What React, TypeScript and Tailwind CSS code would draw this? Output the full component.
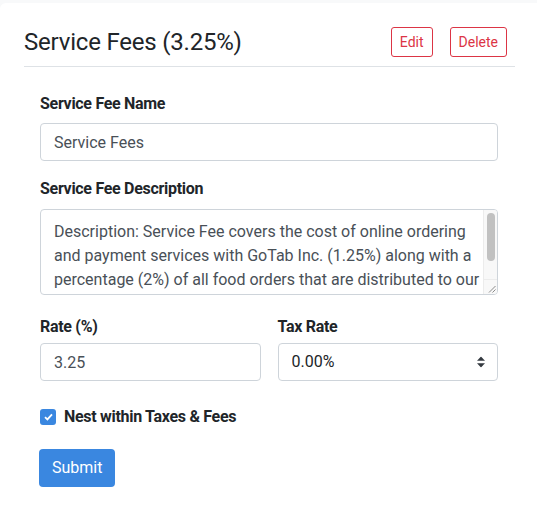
import { useState } from 'react'

const font = { fontFamily: 'Roboto, "Liberation Sans", sans-serif' }

const DESCRIPTION =
  'Description: Service Fee covers the cost of online ordering and payment services with GoTab Inc. (1.25%) along with a percentage (2%) of all food orders that are distributed to our kitchen staff.'

export default function App() {
  const [name, setName] = useState('Service Fees')
  const [description, setDescription] = useState(DESCRIPTION)
  const [rate, setRate] = useState('3.25')
  const [taxRate, setTaxRate] = useState('0.00%')
  const [nested, setNested] = useState(true)

  return (
    <div className="min-h-[509px] bg-[#f8f9fa] pt-[3px]" style={font}>
      <div className="min-h-[506px] rounded-tl-md bg-white pl-6 pr-[22px] text-[#212529]">
        {/* Header */}
        <div className="flex items-center justify-between border-b border-[#dee2e6] pt-6 pb-[9px] pr-2">
          <h2 className="text-[24px] font-normal leading-[30px] tracking-[-0.2px]">Service Fees (3.25%)</h2>
          <div className="flex gap-[17px]">
            <button className="h-[30px] rounded-[3px] border border-[#dc3545] px-2 text-[14px] text-[#dc3545]">
              Edit
            </button>
            <button className="h-[30px] rounded-[3px] border border-[#dc3545] px-2 text-[14px] text-[#dc3545]">
              Delete
            </button>
          </div>
        </div>

        {/* Form */}
        <form className="px-4 pt-[25px] pr-[17px]" onSubmit={(e) => e.preventDefault()}>
          <label className="mb-[7px] block text-[16px] font-bold leading-6 tracking-[-0.3px]">Service Fee Name</label>
          <input
            value={name}
            onChange={(e) => setName(e.target.value)}
            className="block h-[38px] w-full rounded-[4px] border border-[#ced4da] px-[13px] text-[16px] text-[#495057] outline-none"
          />

          <label className="mt-4 mb-2 block text-[16px] font-bold leading-6 tracking-[-0.3px]">Service Fee Description</label>
          <div className="relative">
            <textarea
              value={description}
              onChange={(e) => setDescription(e.target.value)}
              rows={3}
              className="block h-[86px] w-full rounded-[4px] border border-[#ced4da] px-[13px] py-[10px] text-[16px] leading-6 text-[#495057] outline-none [scrollbar-width:none]"
            />
            {/* scrollbar look */}
            <div className="pointer-events-none absolute top-[1px] right-[1px] bottom-[16px] w-[14px] rounded-tr-[3px] border-l border-[#ececec] bg-[#f8f8f8]">
              <div className="absolute top-[3px] left-[3px] h-[48px] w-[8px] rounded-full bg-[#c1c1c1]" />
            </div>
            <div className="pointer-events-none absolute right-[1px] bottom-[1px] h-[15px] w-[14px] rounded-br-[3px] border-t border-l border-[#ececec] bg-[#f8f8f8]">
              <svg className="absolute right-[1px] bottom-[1px]" width="8" height="8" viewBox="0 0 8 8">
                <path d="M7.5 1 L1 7.5 M7.5 4.5 L4.5 7.5" stroke="#8a8a8a" strokeWidth="1" />
              </svg>
            </div>
          </div>

          <div className="mt-[20px] grid grid-cols-2 gap-[17px]">
            <div>
              <label className="mb-1 block text-[16px] font-bold leading-6 tracking-[-0.3px]">Rate (%)</label>
              <input
                value={rate}
                onChange={(e) => setRate(e.target.value)}
                className="block h-[38px] w-full rounded-[4px] border border-[#ced4da] px-[13px] text-[16px] text-[#495057] outline-none"
              />
            </div>
            <div>
              <label className="mb-1 block text-[16px] font-bold leading-6 tracking-[-0.3px]">Tax Rate</label>
              <div className="relative">
                <select
                  value={taxRate}
                  onChange={(e) => setTaxRate(e.target.value)}
                  className="block h-[38px] w-full appearance-none rounded-[4px] border border-[#ced4da] bg-white px-[13px] text-[16px] text-[#212529] outline-none"
                >
                  <option>0.00%</option>
                  <option>5.00%</option>
                  <option>10.00%</option>
                </select>
                <svg
                  className="pointer-events-none absolute right-[13px] top-1/2 -translate-y-1/2"
                  width="8"
                  height="11"
                  viewBox="0 0 8 11"
                >
                  <path d="M4 0 L8 4.3 H0 Z M4 11 L0 6.7 H8 Z" fill="#343a40" />
                </svg>
              </div>
            </div>
          </div>

          <label className="mt-[24px] flex items-center gap-2 text-[16px] font-bold tracking-[-0.3px]">
            <span
              onClick={() => setNested(!nested)}
              className={`flex h-4 w-4 items-center justify-center rounded-[3px] ${nested ? 'bg-[#3a87e0]' : 'border border-[#adb5bd] bg-white'}`}
            >
              {nested && (
                <svg width="9" height="8" viewBox="0 0 9 8">
                  <path d="M1 4.2 L3.4 6.4 L8 1.4" fill="none" stroke="white" strokeWidth="1.8" />
                </svg>
              )}
            </span>
            Nest within Taxes &amp; Fees
          </label>

          <button
            type="submit"
            className="-ml-px mt-[20px] h-[38px] rounded-[4px] bg-[#3a87e0] px-[13px] text-[16px] text-white"
          >
            Submit
          </button>
        </form>
      </div>
    </div>
  )
}
